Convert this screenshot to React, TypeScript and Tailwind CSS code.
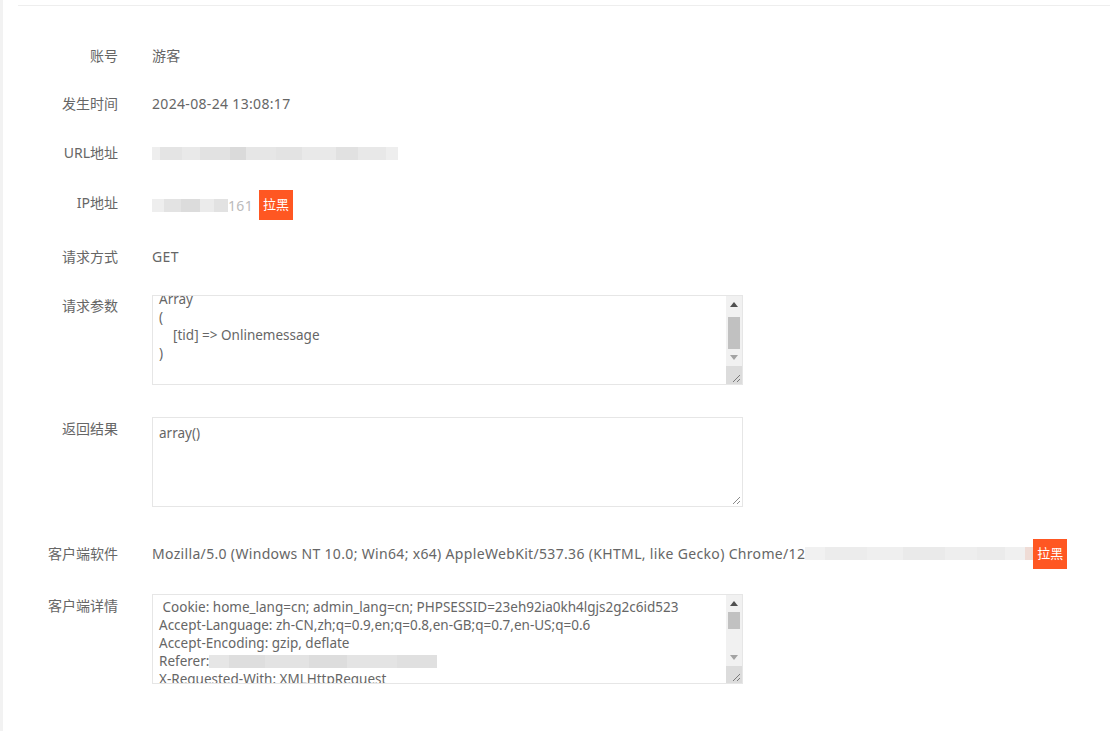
const font = {
  fontFamily: '"Noto Sans", "Noto Sans CJK SC", sans-serif',
};

type Block = { w: number; c: string };

const urlBlur: Block[] = [
  { w: 8, c: "#eeeeee" },
  { w: 22, c: "#e4e4e4" },
  { w: 18, c: "#e9e9e9" },
  { w: 30, c: "#e2e2e2" },
  { w: 16, c: "#dadada" },
  { w: 30, c: "#e6e6e6" },
  { w: 26, c: "#e3e3e3" },
  { w: 34, c: "#e9e9e9" },
  { w: 22, c: "#e1e1e1" },
  { w: 28, c: "#e8e8e8" },
  { w: 12, c: "#eeeeee" },
];

const ipBlur: Block[] = [
  { w: 12, c: "#eeeeee" },
  { w: 17, c: "#e3e3e3" },
  { w: 19, c: "#dcdcdc" },
  { w: 14, c: "#ebebeb" },
  { w: 14, c: "#e2e2e2" },
];

const uaBlur: Block[] = [
  { w: 20, c: "#f1f1f1" },
  { w: 42, c: "#ececec" },
  { w: 36, c: "#efefef" },
  { w: 42, c: "#eaeaea" },
  { w: 32, c: "#eeeeee" },
  { w: 28, c: "#ebebeb" },
  { w: 20, c: "#f0f0f0" },
  { w: 8, c: "#efdcd6" },
];

const refBlur: Block[] = [
  { w: 20, c: "#e6e6e6" },
  { w: 36, c: "#dedede" },
  { w: 44, c: "#e3e3e3" },
  { w: 38, c: "#dddddd" },
  { w: 50, c: "#e4e4e4" },
  { w: 40, c: "#e0e0e0" },
];

function Blur({ blocks, tail }: { blocks: Block[]; tail?: string }) {
  return (
    <span className="inline-flex items-center">
      <span className="inline-flex h-[13px]">
        {blocks.map((b, i) => (
          <span key={i} style={{ width: b.w, background: b.c }} />
        ))}
      </span>
      {tail && <span className="text-[#bbb]">{tail}</span>}
    </span>
  );
}

function Badge() {
  return (
    <span className="inline-flex h-[30px] w-[34px] items-center justify-center bg-[#ff5722] text-[13px] tracking-normal text-white">
      拉黑
    </span>
  );
}

function Scrollbar({ track, thumbTop, thumbH }: { track: number; thumbTop: number; thumbH: number }) {
  return (
    <div className="flex w-[16px] flex-col bg-[#f1f1f1]">
      <div className="flex h-[17px] items-center justify-center">
        <svg width="8" height="5" viewBox="0 0 8 5">
          <path d="M4 0 L8 5 L0 5 Z" fill="#505050" />
        </svg>
      </div>
      <div className="relative" style={{ height: track }}>
        <div
          className="absolute left-[2px] right-[2px] bg-[#c1c1c1]"
          style={{ top: thumbTop, height: thumbH }}
        />
      </div>
      <div className="flex h-[17px] items-center justify-center">
        <svg width="8" height="5" viewBox="0 0 8 5">
          <path d="M0 0 L8 0 L4 5 Z" fill="#a3a3a3" />
        </svg>
      </div>
      <div className="flex flex-1 items-end justify-end bg-[#dcdcdc] p-[2px]">
        <svg width="8" height="8" viewBox="0 0 8 8">
          <path d="M1 8 L8 1 M5 8 L8 5" stroke="#7a7a7a" strokeWidth="1" />
        </svg>
      </div>
    </div>
  );
}

function Label({ children, className = "" }: { children: React.ReactNode; className?: string }) {
  return (
    <div className={`w-[100px] shrink-0 text-right leading-5 tracking-normal ${className}`}>{children}</div>
  );
}

export default function App() {
  return (
    <div className="flex min-h-[731px] bg-white text-[14px] tracking-[0.33px] text-[#666]" style={font}>
      <div className="w-[3px] shrink-0 bg-[#f2f2f2]" />
      <div className="flex-1 pl-[15px] pt-[5px]">
        <div className="border-t border-[#eeeeee]">
          {/* 账号 */}
          <div className="mt-[40px] flex h-[20px] items-center gap-[34px]">
            <Label>账号</Label>
            <div className="leading-5">游客</div>
          </div>

          <div className="mt-[28px] flex h-[20px] items-center gap-[34px]">
            <Label>发生时间</Label>
            <div className="leading-5">2024-08-24 13:08:17</div>
          </div>

          <div className="mt-[29px] flex h-[20px] items-center gap-[34px]">
            <Label>URL地址</Label>
            <Blur blocks={urlBlur} />
          </div>

          <div className="mt-[27px] flex h-[30px] items-center gap-[34px]">
            <Label className="-mt-[4px]">IP地址</Label>
            <div className="flex items-center gap-[6px]">
              <Blur blocks={ipBlur} tail="161" />
              <Badge />
            </div>
          </div>

          <div className="mt-[27px] flex h-[20px] items-center gap-[34px]">
            <Label>请求方式</Label>
            <div className="leading-5">GET</div>
          </div>

          {/* 请求参数 */}
          <div className="mt-[28px] flex items-start gap-[34px]">
            <Label className="pt-[1px]">请求参数</Label>
            <div className="flex h-[90px] w-[591px] border border-[#e6e6e6] text-[13.5px] tracking-normal">
              <div className="flex-1 overflow-hidden pl-[6px] leading-[18px]">
                <div className="-mt-[6px] whitespace-pre">
                  <div>Array</div>
                  <div>(</div>
                  <div>    [tid] =&gt; Onlinemessage</div>
                  <div>)</div>
                </div>
              </div>
              <Scrollbar track={36} thumbTop={4} thumbH={32} />
            </div>
          </div>

          {/* 返回结果 */}
          <div className="mt-[32px] flex items-start gap-[34px]">
            <Label className="pt-[2px]">返回结果</Label>
            <div className="relative h-[90px] w-[591px] border border-[#e6e6e6] pl-[6px] pt-[6px] text-[13.5px] leading-[18px] tracking-normal">
              array()
              <svg className="absolute bottom-[2px] right-[2px]" width="8" height="8" viewBox="0 0 8 8">
                <path d="M1 8 L8 1 M5 8 L8 5" stroke="#8a8a8a" strokeWidth="1" />
              </svg>
            </div>
          </div>

          {/* 客户端软件 */}
          <div className="mt-[32px] flex h-[29px] items-center gap-[34px]">
            <Label>客户端软件</Label>
            <div className="flex items-center">
              <span className="whitespace-nowrap leading-5">
                Mozilla/5.0 (Windows NT 10.0; Win64; x64) AppleWebKit/537.36 (KHTML, like Gecko) Chrome/12
              </span>
              <Blur blocks={uaBlur} />
              <Badge />
            </div>
          </div>

          {/* 客户端详情 */}
          <div className="mt-[26px] flex items-start gap-[34px]">
            <Label className="pt-[2px]">客户端详情</Label>
            <div className="flex h-[90px] w-[591px] border border-[#e6e6e6] text-[13.5px] tracking-normal">
              <div className="flex-1 overflow-hidden whitespace-pre pl-[6px] pt-[3px] leading-[18px]">
                <div> Cookie: home_lang=cn; admin_lang=cn; PHPSESSID=23eh92ia0kh4lgjs2g2c6id523</div>
                <div>Accept-Language: zh-CN,zh;q=0.9,en;q=0.8,en-GB;q=0.7,en-US;q=0.6</div>
                <div>Accept-Encoding: gzip, deflate</div>
                <div className="flex items-center">
                  Referer:
                  <Blur blocks={refBlur} />
                </div>
                <div>X-Requested-With: XMLHttpRequest</div>
              </div>
              <Scrollbar track={37} thumbTop={0} thumbH={17} />
            </div>
          </div>
        </div>
      </div>
    </div>
  );
}
